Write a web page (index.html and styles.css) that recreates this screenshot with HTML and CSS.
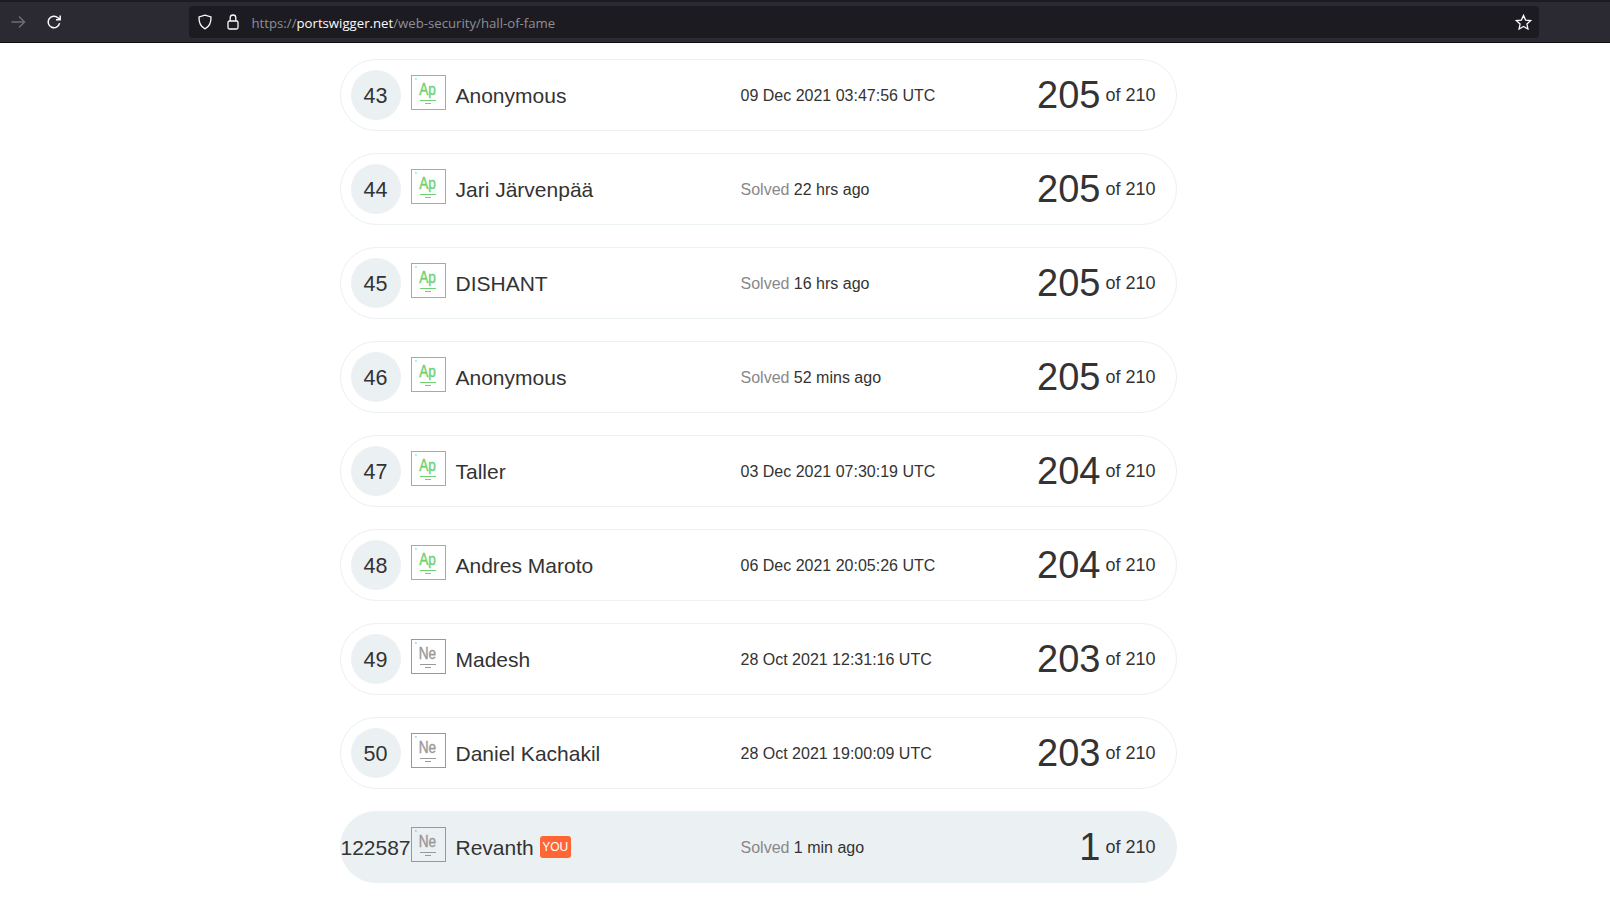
FILE: index.html
```html
<!DOCTYPE html>
<html lang="en">
<head>
  <meta charset="UTF-8" />
  <title>Hall of Fame</title>
  <link rel="stylesheet" href="styles.css">
</head>
<body>
  <header class="toolbar">
    <svg class="nav-icon forward" viewBox="0 0 16 16"><path d="M1.500 8h13M9 2.500 14.500 8 9 13.500"/></svg>
    <svg class="nav-icon reload" viewBox="0 0 16 16"><path d="M13.600 9.200A5.800 5.800 0 1 1 11.900 3.700L14 5.600M14.200 1.600v4.200h-4.200"/></svg>
    <div class="urlbar">
      <svg class="url-icon" viewBox="0 0 16 16"><path d="M8 1.200 14 3c.2 5.600-1.600 9.600-6 11.800C3.600 12.600 1.800 8.600 2 3z"/></svg>
      <svg class="url-icon" viewBox="0 0 16 16"><rect x="3" y="7" width="10" height="8" rx="1.500"/><path d="M5.200 7V3.800a2.800 2.800 0 0 1 5.600 0V7"/></svg>
      <span class="url">https://<b>portswigger.net</b>/web-security/hall-of-fame</span>
      <svg class="star" viewBox="0 0 16 16"><path d="m8 1.300 2 4.400 4.800.5-3.600 3.200 1 4.700L8 11.700l-4.200 2.400 1-4.700L1.200 6.200 6 5.700z"/></svg>
    </div>
  </header>

  <main class="board" id="board"></main>

  <script>
    const rows = [
      { rank: 43, name: "Anonymous", when: "09 Dec 2021 03:47:56 UTC", score: 205, badge: "Ap" },
      { rank: 44, name: "Jari Järvenpää", ago: "22 hrs ago", score: 205, badge: "Ap" },
      { rank: 45, name: "DISHANT", ago: "16 hrs ago", score: 205, badge: "Ap" },
      { rank: 46, name: "Anonymous", ago: "52 mins ago", score: 205, badge: "Ap" },
      { rank: 47, name: "Taller", when: "03 Dec 2021 07:30:19 UTC", score: 204, badge: "Ap" },
      { rank: 48, name: "Andres Maroto", when: "06 Dec 2021 20:05:26 UTC", score: 204, badge: "Ap" },
      { rank: 49, name: "Madesh", when: "28 Oct 2021 12:31:16 UTC", score: 203, badge: "Ne" },
      { rank: 50, name: "Daniel Kachakil", when: "28 Oct 2021 19:00:09 UTC", score: 203, badge: "Ne" },
      { rank: 122587, name: "Revanth", ago: "1 min ago", score: 1, badge: "Ne", you: true }
    ];

    const board = document.getElementById("board");

    rows.forEach(r => {
      const div = document.createElement("div");
      div.className = r.you ? "row row-you" : "row";
      const time = r.ago ? `<span class="muted">Solved</span> ${r.ago}` : r.when;
      div.innerHTML = `
        <div class="rank">${r.rank}</div>
        <div class="badge badge-${r.badge}">
          <span class="tick">'</span>
          <span class="sym">${r.badge}</span>
          <i class="line1"></i><i class="line2"></i>
        </div>
        <div class="name">${r.name}${r.you ? '<span class="you">YOU</span>' : ''}</div>
        <div class="time">${time}</div>
        <div class="score"><span class="big">${r.score}</span> of 210</div>
      `;
      board.appendChild(div);
    });
  </script>
</body>
</html>
```

FILE: styles.css
```css
body {
  margin: 0;
  background: #fff;
  font-family: "Liberation Sans", Arial, sans-serif;
  color: #333;
  overflow: hidden;
}

.toolbar {
  height: 43px;
  box-sizing: border-box;
  border-top: 2px solid #1c1b22;
  border-bottom: 1px solid #0c0c0d;
  background: #2b2a33;
  display: flex;
  align-items: center;
  padding: 0 71px 0 10px;
}

.nav-icon {
  width: 16px;
  height: 16px;
  fill: none;
  stroke-width: 1.5;
}

.forward { stroke: #6d6c73; }
.reload { stroke: #fbfbfe; margin-left: 20px; }

.urlbar {
  flex: 1;
  height: 32px;
  margin-left: 127px;
  background: #1c1b22;
  border-radius: 4px;
  display: flex;
  align-items: center;
  padding: 0 8px;
  gap: 12px;
}

.url-icon {
  width: 16px;
  height: 16px;
  fill: none;
  stroke: #fbfbfe;
  stroke-width: 1.3;
}

.url {
  font-family: "Open Sans", sans-serif;
  font-size: 13.2px;
  color: #8f8f94;
  margin-left: -1.500px;
  padding-top: 2px;
  flex: 1;
}

.url b {
  font-weight: 400;
  color: #fbfbfe;
}

.star {
  width: 17px;
  height: 17px;
  margin-right: -1px;
  fill: none;
  stroke: #fbfbfe;
  stroke-width: 1.2;
}

.board {
  width: 837px;
  margin: 16px 0 0 340px;
  display: flex;
  flex-direction: column;
  gap: 22px;
}

.row {
  height: 72px;
  box-sizing: border-box;
  border: 1px solid #ebf0f2;
  border-radius: 36px;
  display: flex;
  align-items: center;
}

.row-you {
  background: #ebf0f2;
}

.rank {
  width: 50px;
  height: 50px;
  margin-left: 10px;
  flex: none;
  box-sizing: border-box;
  padding: 2px 1px 0 0;
  border-radius: 50%;
  background: #ebf0f2;
  display: flex;
  align-items: center;
  justify-content: center;
  font-size: 21.5px;
  white-space: nowrap;
}

.row-you .rank {
  font-size: 21px;
}

.badge {
  width: 35px;
  height: 35px;
  margin: -5px 0 0 10px;
  flex: none;
  box-sizing: border-box;
  border: 1.5px solid;
  position: relative;
}

.badge-Ap { color: #6fd16f; }
.badge-Ne { color: #999; }

.tick {
  position: absolute;
  left: 3px;
  top: 0;
  font-size: 9px;
}

.sym {
  display: block;
  text-align: center;
  font-size: 16px;
  line-height: 16px;
  margin-top: 6px;
  -webkit-text-stroke: 0.4px;
  transform: translateX(-1px) scaleX(0.85);
}

.line1, .line2 {
  position: absolute;
  height: 1px;
  background: currentColor;
  top: 24px;
  left: 8px;
  width: 16px;
}

.line2 {
  top: 27px;
  left: 13px;
  width: 6px;
}

.name {
  width: 285px;
  margin-left: 9.500px;
  padding-top: 2px;
  flex: none;
  font-size: 21px;
  display: flex;
  align-items: center;
}

.you {
  background: #ff6633;
  color: #fff;
  font-size: 12px;
  line-height: 22px;
  padding: 0 2.500px;
  border-radius: 3px;
  margin: -2px 0 0 6px;
}

.time {
  font-size: 16px;
  padding-top: 2px;
  flex: 1;
}

.muted { color: #888; }

.score {
  font-size: 18px;
  padding-right: 20.500px;
  display: flex;
  align-items: center;
  white-space: pre;
}

.big {
  font-size: 38px;
}
```
